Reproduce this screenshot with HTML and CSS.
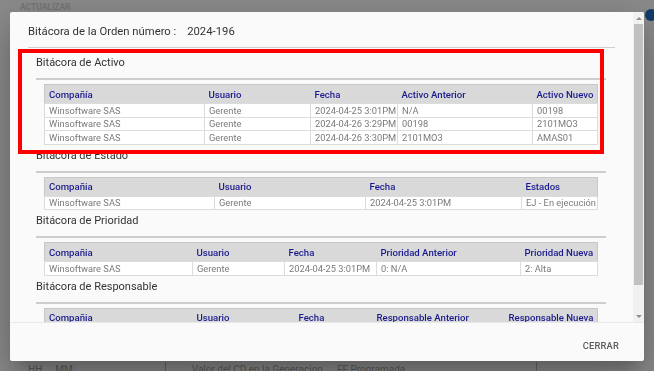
FILE: index.html
```html
<!DOCTYPE html>
<html lang="es">
<head>
    <meta charset="UTF-8">
    <meta name="viewport" content="width=device-width, initial-scale=1.0">
    <title>Bitácora de la Orden</title>
    <link rel="stylesheet" href="styles.css">
</head>
<body>
    <!-- Page behind the dialog -->
    <div class="page">
        <div class="page-top">
            <span class="page-action">ACTUALIZAR</span>
            <span class="page-dot"></span>
        </div>
        <div class="page-bottom">
            <span class="pb-hh">HH</span>
            <span class="pb-mm">MM</span>
            <span class="pb-valor">Valor del CD en la Generacion</span>
            <span class="pb-ff">FF Programada</span>
        </div>
    </div>

    <!-- Dialog -->
    <div class="backdrop">
        <div class="dialog">
            <div class="dialog-main">
                <div class="dialog-body">
                    <div class="order-title">Bitácora de la Orden número : <span class="order-num">2024-196</span></div>

                    <div class="sections">
                        <div class="section">
                            <h3>Bitácora de Activo</h3>
                            <div class="table-wrap">
                                <table>
                                    <colgroup>
                                        <col style="width:160px"><col style="width:106px"><col style="width:87px"><col style="width:135px"><col>
                                    </colgroup>
                                    <tr><th>Compañía</th><th>Usuario</th><th>Fecha</th><th>Activo Anterior</th><th>Activo Nuevo</th></tr>
                                    <tr><td>Winsoftware SAS</td><td>Gerente</td><td>2024-04-25 3:01PM</td><td>N/A</td><td>00198</td></tr>
                                    <tr><td>Winsoftware SAS</td><td>Gerente</td><td>2024-04-26 3:29PM</td><td>00198</td><td>2101MO3</td></tr>
                                    <tr><td>Winsoftware SAS</td><td>Gerente</td><td>2024-04-26 3:30PM</td><td>2101MO3</td><td>AMAS01</td></tr>
                                </table>
                            </div>
                        </div>

                        <div class="section">
                            <h3>Bitácora de Estado</h3>
                            <div class="table-wrap">
                                <table>
                                    <colgroup>
                                        <col style="width:170px"><col style="width:151px"><col style="width:156px"><col>
                                    </colgroup>
                                    <tr><th>Compañia</th><th>Usuario</th><th>Fecha</th><th>Estados</th></tr>
                                    <tr><td>Winsoftware SAS</td><td>Gerente</td><td>2024-04-25 3:01PM</td><td>EJ - En ejecución</td></tr>
                                </table>
                            </div>
                        </div>

                        <div class="section">
                            <h3>Bitácora de Prioridad</h3>
                            <div class="table-wrap">
                                <table>
                                    <colgroup>
                                        <col style="width:148px"><col style="width:92px"><col style="width:92px"><col style="width:144px"><col>
                                    </colgroup>
                                    <tr><th>Compañia</th><th>Usuario</th><th>Fecha</th><th>Prioridad Anterior</th><th>Prioridad Nueva</th></tr>
                                    <tr><td>Winsoftware SAS</td><td>Gerente</td><td>2024-04-25 3:01PM</td><td>0: N/A</td><td>2: Alta</td></tr>
                                </table>
                            </div>
                        </div>

                        <div class="section">
                            <h3>Bitácora de Responsable</h3>
                            <div class="table-wrap">
                                <table>
                                    <colgroup>
                                        <col style="width:148px"><col style="width:102px"><col style="width:78px"><col style="width:132px"><col>
                                    </colgroup>
                                    <tr><th>Compañia</th><th>Usuario</th><th>Fecha</th><th>Responsable Anterior</th><th>Responsable Nueva</th></tr>
                                </table>
                            </div>
                        </div>
                    </div>
                </div>

                <div class="scrollbar">
                    <div class="sb-btn"><span class="arrow-up"></span></div>
                    <div class="sb-track"><div class="sb-thumb"></div></div>
                    <div class="sb-btn"><span class="arrow-down"></span></div>
                </div>
            </div>

            <div class="dialog-footer">
                <button class="btn-close">Cerrar</button>
            </div>
        </div>
    </div>

    <!-- Annotation -->
    <div class="highlight"></div>
</body>
</html>
```

FILE: styles.css
```css
/* General */
* {
    box-sizing: border-box;
}

html, body {
    margin: 0;
    height: 100%;
}

body {
    font-family: Roboto, "Noto Sans", sans-serif;
    background: #ffffff;
    overflow: hidden;
}

/* Page behind */
.page {
    height: 100vh;
    display: flex;
    flex-direction: column;
    justify-content: space-between;
}

.page-top {
    display: flex;
    justify-content: space-between;
    align-items: center;
    height: 14px;
    padding: 0 0 0 20px;
    font-size: 8.5px;
    font-weight: 500;
    color: #d2d2d2;
}

.page-dot {
    width: 12px;
    height: 12px;
    margin-top: 16px;
    margin-right: -3px;
    border-radius: 50%;
    background: #1f6fc8;
}

.page-bottom {
    display: flex;
    align-items: flex-start;
    height: 9px;
    font-size: 10px;
    color: #a8a8a8;
    line-height: 16px;
}

.pb-hh {
    margin-left: 28px;
}

.pb-mm {
    margin-left: 13px;
    padding-right: 92px;
    border-right: 1px solid #bbb;
}

.pb-valor {
    margin-left: 26px;
}

.pb-ff {
    margin-left: 14px;
    width: 200px;
    border-right: 1px solid #bbb;
}

/* Dialog */
.backdrop {
    position: fixed;
    inset: 0;
    background: rgba(0, 0, 0, 0.46);
}

.dialog {
    position: absolute;
    left: 10px;
    top: 12px;
    width: 634px;
    height: 349px;
    display: flex;
    flex-direction: column;
    background: #fafafa;
    border-radius: 2px;
    overflow: hidden;
    box-shadow: 0 11px 15px -7px rgba(0, 0, 0, 0.2), 0 24px 38px 3px rgba(0, 0, 0, 0.14), 0 9px 46px 8px rgba(0, 0, 0, 0.12);
}

.dialog-main {
    flex: 1;
    display: flex;
    min-height: 0;
}

.dialog-body {
    flex: 1;
    overflow: hidden;
    padding: 10px 18px 0;
}

.order-title {
    font-size: 11.3px;
    line-height: 20px;
    color: #333;
    padding-bottom: 5px;
    border-bottom: 1px solid #cfcfcf;
}

.order-num {
    margin-left: 8px;
}

.sections {
    padding-top: 3px;
}

.section {
    padding: 0 9px 0 8px;
}

.section h3 {
    margin: 4px 0 4px;
    padding-bottom: 7px;
    font-size: 11px;
    font-weight: 400;
    line-height: 16px;
    color: #333;
    border-bottom: 2px solid #cdcdcd;
}

.section + .section h3 {
    margin-top: 3px;
}

.table-wrap {
    padding: 0 8px;
}

/* Tables */
table {
    width: 100%;
    table-layout: fixed;
    border-collapse: collapse;
    border: 1px solid #c8c8c8;
}

th {
    height: 19px;
    padding: 0 4px;
    background: #d9d9d9;
    color: #1b1b8f;
    font-size: 9.6px;
    font-weight: 500;
    text-align: left;
    white-space: nowrap;
    overflow: hidden;
}

td {
    height: 13.5px;
    padding: 0 4px;
    background: #ffffff;
    border: 1px solid #dcdcdc;
    color: #7a7a7a;
    font-size: 9.3px;
    line-height: 11px;
    white-space: nowrap;
    overflow: hidden;
}

/* Scrollbar */
.scrollbar {
    width: 11px;
    display: flex;
    flex-direction: column;
    background: #f1f1f1;
}

.sb-btn {
    height: 12px;
    display: flex;
    align-items: center;
    justify-content: center;
}

.arrow-up {
    border-left: 3px solid transparent;
    border-right: 3px solid transparent;
    border-bottom: 3px solid #8f8f8f;
}

.arrow-down {
    border-left: 3px solid transparent;
    border-right: 3px solid transparent;
    border-top: 3px solid #8f8f8f;
}

.sb-track {
    flex: 1;
    padding: 0 1px;
}

.sb-thumb {
    height: 261px;
    background: #c1c1c1;
}

/* Footer */
.dialog-footer {
    height: 39px;
    display: flex;
    justify-content: flex-end;
    align-items: center;
    padding: 6px 17px 0 0;
    border-top: 1px solid #e9e9e9;
}

.btn-close {
    padding: 6px 8px;
    background: none;
    border: none;
    font-family: Roboto, sans-serif;
    font-size: 9.3px;
    font-weight: 500;
    letter-spacing: 0.2px;
    text-transform: uppercase;
    color: #5a5a5a;
    cursor: pointer;
}

/* Annotation */
.highlight {
    position: absolute;
    left: 18px;
    top: 49px;
    width: 586px;
    height: 105px;
    border: 4px solid #ff0000;
}
```
